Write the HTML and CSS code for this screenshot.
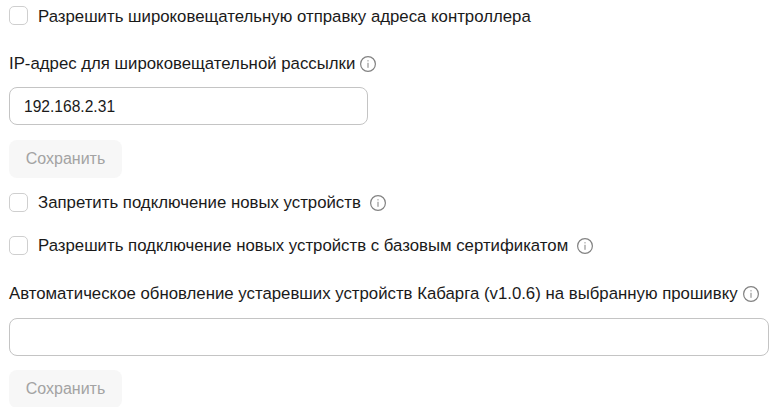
FILE: index.html
```html
<!DOCTYPE html>
<html lang="ru">
<head>
<meta charset="utf-8">
<title>Настройки</title>
<link rel="stylesheet" href="styles.css">
</head>
<body>
<svg class="defs" width="0" height="0" aria-hidden="true">
  <symbol id="info" viewBox="0 0 16 16">
    <circle cx="8" cy="8" r="7.4" fill="none" stroke="#828282" stroke-width="1.2"/>
    <rect x="7.5" y="6.8" width="1" height="5" fill="#828282"/>
    <rect x="7.5" y="4.2" width="1" height="1.2" fill="#828282"/>
  </symbol>
</svg>
<main class="form">
  <label class="check first"><span class="box"></span><span class="low">Разрешить широковещательную отправку адреса контроллера</span></label>
  <div class="field">
    <div class="label">IP-адрес для широковещательной рассылки<svg class="info"><use href="#info"/></svg></div>
    <div class="input short">192.168.2.31</div>
    <button class="save" disabled>Сохранить</button>
  </div>
  <label class="check after-save"><span class="box"></span><span>Запретить подключение новых устройств</span><svg class="info wide"><use href="#info"/></svg></label>
  <label class="check next"><span class="box"></span><span>Разрешить подключение новых устройств с базовым сертификатом</span><svg class="info wide"><use href="#info"/></svg></label>
  <div class="field">
    <div class="label">Автоматическое обновление устаревших устройств Кабарга (v1.0.6) на выбранную прошивку<svg class="info"><use href="#info"/></svg></div>
    <div class="input tall-gap"></div>
    <button class="save tight" disabled>Сохранить</button>
  </div>
</main>
</body>
</html>
```
FILE: styles.css
```css
* { box-sizing: border-box; }
html, body { margin: 0; height: 407px; overflow: hidden; background: #fff; }
.defs { position: absolute; }
.form {
  padding: 6px 6px 0 9px;
  font-family: "Liberation Sans", Arial, sans-serif;
  font-size: 16.8px;
  color: #1a1a1a;
}
.check { display: flex; align-items: center; height: 19px; }
.box {
  width: 19px; height: 19px; margin-right: 10px;
  border: 1px solid #cfcfcf; border-radius: 5px; background: #fff;
  flex: none;
}
.low { padding-top: 2px; }
.after-save { margin-top: 15px; }
.next { margin-top: 24px; }
.field { margin-top: 29px; }
.label { display: flex; align-items: center; height: 20px; }
.info { width: 16px; height: 16px; margin-left: 5px; flex: none; }
.info.wide { margin-left: 9px; }
.input {
  display: flex; align-items: center;
  height: 38px; margin-top: 13px; padding: 2px 14px 0;
  border: 1px solid #c4c4c4; border-radius: 8px;
  background: #fff;
  font-size: 15.6px;
}
.input.tall-gap { margin-top: 14px; }
.input.short { width: 359px; }
.save {
  display: block; width: 113px; height: 38px; margin-top: 15px;
  border: 0; border-radius: 8px; background: #f7f7f7; color: #a3a3a3;
  font-family: inherit; font-size: 16px;
}
.save.tight { margin-top: 14px; }
```
